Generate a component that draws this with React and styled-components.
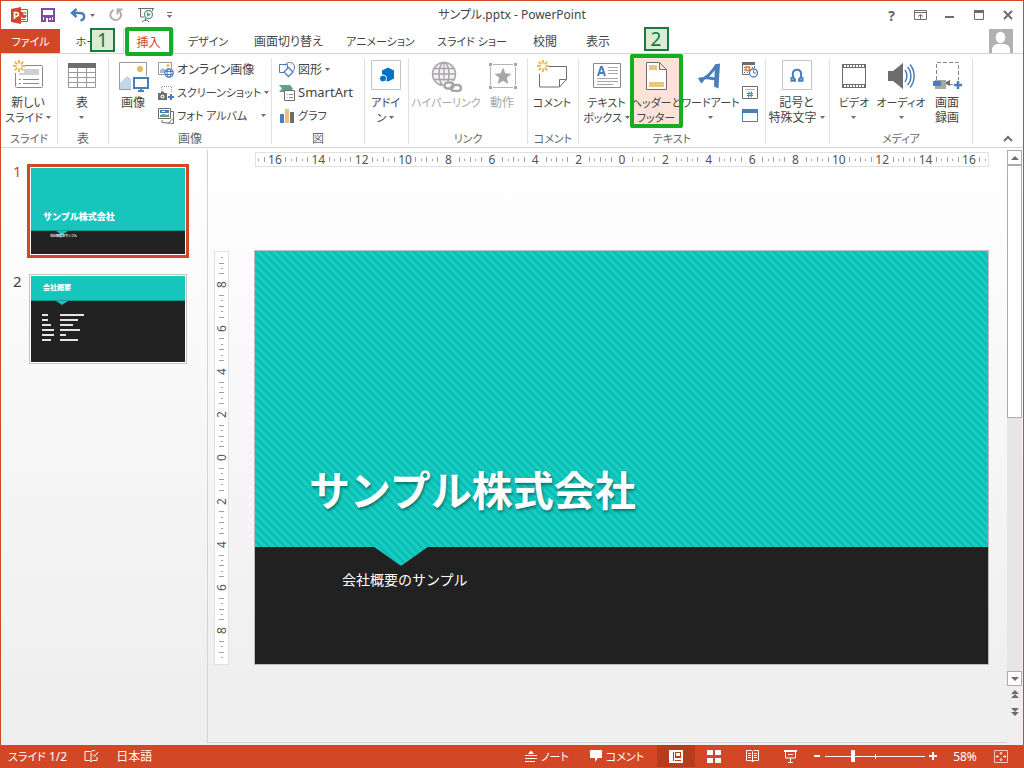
import React from "react";
import styled, { createGlobalStyle, css } from "styled-components";

const RED = "#d24726";
const GREEN = "#13ad26";
const GREY = "#6d6d6d";
const BLUE = "#4a7ebb";
const TAN = "#ecc67c";

const Global = createGlobalStyle`
  *, *::before, *::after { box-sizing: border-box; }
  body { margin: 0; }
  body, button, input {
    font-family: "Noto Sans", "Noto Sans CJK JP", sans-serif;
    font-size: 12px;
    line-height: 15px;
    color: #444;
  }
  button { border: 0; padding: 0; margin: 0; background: none; font-feature-settings: "palt"; white-space: nowrap; }
  svg { display: block; flex: none; }
`;

const Window = styled.div`
  min-height: 100vh;
  display: flex;
  flex-direction: column;
  border: 1px solid ${RED};
  background: #fff;
  font-feature-settings: "palt";
`;

/* Katakana labels are set one size down so that they stay compact. */
const Kana = styled.span`
  font-size: 11px;
`;

/* ---------- title bar ---------- */
const TitleBar = styled.header`
  height: 28px;
  display: grid;
  grid-template-columns: 1fr auto 1fr;
  align-items: center;
`;
const QuickAccess = styled.div`
  display: flex;
  align-items: center;
  padding-left: 8px;
`;
const QuickButton = styled.button`
  width: ${(p) => p.$w || 28}px;
  height: 26px;
  display: flex;
  align-items: center;
  justify-content: center;
  gap: 4px;
`;
const Title = styled.h1`
  margin: 0;
  font-size: 12px;
  line-height: 16px;
  font-weight: 400;
`;
const WindowButtons = styled.div`
  display: flex;
  justify-content: flex-end;
  padding-right: 1px;
`;
const WindowButton = styled.button`
  width: 29px;
  height: 28px;
  display: flex;
  align-items: center;
  justify-content: center;
  font-size: 14px;
  font-weight: 700;
  color: #666;
`;

/* ---------- tabs ---------- */
const TabRow = styled.nav`
  height: 25px;
  display: flex;
  border-bottom: 1px solid #d4d4d4;
`;
const Tab = styled.button`
  position: relative;
  width: ${(p) => p.$w}px;
  height: 25px;
  flex: none;
  ${(p) => p.$file && css`background: ${RED}; color: #fff; height: 24px;`}
  ${(p) => p.$active && css`
    color: ${RED};
    background: #fff;
    border: 1px solid #d4d4d4;
    border-bottom: 0;
  `}
`;
const Avatar = styled.div`
  margin: 0 10px 0 auto;
  width: 24px;
  height: 24px;
  background: #b1b1b1;
`;

/* ---------- tutorial marks ---------- */
const Frame = styled.span`
  position: absolute;
  inset: ${(p) => p.$inset};
  border: 4px solid ${GREEN};
  border-radius: 2px;
  pointer-events: none;
  z-index: 2;
`;
const Badge = styled.span`
  position: absolute;
  left: ${(p) => p.$left}px;
  top: ${(p) => p.$top}px;
  z-index: 3;
  width: 25px;
  height: 24px;
  border: 2px solid #187a41;
  background: #dcebd4;
  color: #15773c;
  font-size: 19px;
  line-height: 20px;
  text-align: center;
`;

/* ---------- ribbon ---------- */
const Ribbon = styled.section`
  height: 94px;
  display: flex;
  border-bottom: 1px solid #d4d4d4;
  padding-top: 4px;
`;
const Group = styled.div`
  width: ${(p) => p.$w}px;
  height: 86px;
  flex: none;
  display: flex;
  flex-direction: column;
  border-right: 1px solid #e1e1e1;
`;
const GroupBody = styled.div`
  flex: none;
  height: 74px;
  display: flex;
  justify-content: center;
  padding-right: 2px;
`;
const GroupLabel = styled.div`
  flex: none;
  line-height: 14px;
  text-align: center;
  color: #666;
  white-space: nowrap;
`;
const Large = styled.button`
  position: relative;
  width: ${(p) => p.$w}px;
  height: 70px;
  flex: none;
  display: flex;
  flex-direction: column;
  align-items: center;
  gap: 3px;
  padding-top: 2px;
  text-align: center;
  color: ${(p) => (p.disabled ? "#a6a6a6" : "#444")};
  background: ${(p) => (p.$hot ? "#fde2d9" : "transparent")};
`;
const LargeLabel = styled.span`
  display: flex;
  flex-direction: column;
  align-items: center;
`;
const LabelLine = styled.span`
  height: 15px;
  display: flex;
  align-items: center;
  gap: 3px;
`;
const SmallColumn = styled.div`
  width: ${(p) => p.$w}px;
  display: flex;
  flex-direction: column;
`;
const Small = styled.button`
  height: 23px;
  display: flex;
  align-items: center;
  gap: 3px;
  padding: 0 2px;
`;
const Fill = styled.span`
  flex: ${(p) => (p.$grow ? 1 : "none")};
  text-align: left;
  font-size: ${(p) => (p.$latin ? 13 : 12)}px;
`;
const RibbonEnd = styled.div`
  flex: 1;
  display: flex;
  align-items: flex-end;
  justify-content: flex-end;
  padding: 0 10px 4px 0;
`;

/* ---------- work area ---------- */
const Work = styled.main`
  flex: 1;
  display: flex;
  background: linear-gradient(#fff, #efefef 90%);
  padding-top: 2px;
`;
const ThumbPane = styled.ol`
  width: 207px;
  flex: none;
  margin: 0 0 2px;
  padding: 14px 18px 0 12px;
  list-style: none;
  border-right: 1px solid #d4d4d4;
  display: flex;
  flex-direction: column;
  gap: 16px;
`;
const ThumbItem = styled.li`
  display: flex;
  align-items: flex-start;
  justify-content: space-between;
`;
const ThumbNumber = styled.span`
  font-size: 15px;
  line-height: 14px;
  color: ${(p) => (p.$on ? RED : "#444")};
`;
const Thumb = styled.button`
  width: ${(p) => (p.$on ? 162 : 158)}px;
  height: ${(p) => (p.$on ? 94 : 90)}px;
  margin-right: ${(p) => (p.$on ? 0 : 2)}px;
  border: ${(p) => (p.$on ? `3px solid ${RED}` : "1px solid #c4c4c4")};
  padding: 1px;
  background: #fff;
  display: flex;
  flex-direction: column;
  text-align: left;
  color: #fff;
  font-feature-settings: normal;
`;
const ThumbTop = styled.span`
  width: 100%;
  height: ${(p) => p.$h}px;
  display: flex;
  align-items: flex-end;
  padding: 0 12px ${(p) => p.$pad}px;
  background: #16c6bd;
  border-bottom: 1px solid #119c95;
  font-size: ${(p) => p.$size}px;
  line-height: 12px;
  font-weight: 900;
`;
const ThumbBottom = styled.span`
  width: 100%;
  flex: 1;
  background: #222;
  display: flex;
  flex-direction: column;
`;
const ThumbPointer = styled.span`
  margin-left: 25px;
  border: solid transparent;
  border-width: 4px 6px 0;
  border-top-color: #16c6bd;
  width: 12px;
`;
const ThumbSub = styled.span`
  padding-left: 19px;
  font-size: 3px;
  line-height: 3px;
  font-weight: 700;
`;
const ThumbTable = styled.span`
  display: grid;
  grid-template-columns: 18px auto;
  grid-auto-rows: 5px;
  padding: 9px 0 0 11px;
`;
const Bar = styled.span`
  width: ${(p) => p.$w}px;
  height: 2px;
  background: #e4e4e4;
`;

const Stage = styled.section`
  flex: 1;
  min-width: 0;
  display: grid;
  grid-template-columns: 15px 1fr;
  grid-template-rows: 15px auto;
  column-gap: 25px;
  row-gap: 83px;
  align-content: start;
  padding: 2px 18px 0 6px;
  margin-bottom: 2px;
  border-bottom: 1px solid #d4d4d4;
`;
const RulerH = styled.div`
  grid-column: 2;
  height: 15px;
  margin-left: 1px;
  border: 1px solid #e1e1e1;
  background: #fff;
  display: flex;
  align-items: center;
`;
const RulerV = styled.div`
  margin-top: 1px;
  border: 1px solid #e1e1e1;
  background: #fff;
  display: flex;
  flex-direction: column;
  align-items: center;
  padding: 3px 0;
`;
const Notch = styled.span`
  flex: 1 1 0;
  min-width: 0;
  min-height: 0;
  display: flex;
  align-items: center;
  justify-content: center;
`;
const Tick = styled.i`
  flex: none;
  width: ${(p) => (p.$v ? p.$len : 1)}px;
  height: ${(p) => (p.$v ? 1 : p.$len)}px;
  background: #a0a0a0;
`;
const RulerNumber = styled.span`
  flex: none;
  font-size: 12px;
  line-height: 13px;
  color: #555;
  ${(p) => p.$v && css`writing-mode: vertical-rl; transform: rotate(180deg);`}
`;
const Slide = styled.article`
  aspect-ratio: 734 / 414;
  border: 1px solid #bdbdbd;
  background: #212121;
  display: flex;
  flex-direction: column;
  color: #fff;
  font-feature-settings: normal;
`;
const stripes = css`
  background: linear-gradient(45deg, #1dcbc0 30%, #07c1b7 30% 50%, #1dcbc0 50% 80%, #07c1b7 80%) 0 0 / 8px 8px;
`;
const SlideTop = styled.div`
  flex: 296 1 0;
  ${stripes}
  display: flex;
  align-items: flex-end;
`;
const SlideBottom = styled.div`
  flex: 117 1 0;
`;
const SlideTitle = styled.h2`
  margin: 0 54px 30px;
  font-size: 41px;
  line-height: 54px;
  font-weight: 700;
  text-shadow: 1px 2px 3px rgba(0, 60, 60, 0.6);
`;
const Pointer = styled.div`
  width: 54px;
  height: 19px;
  margin-left: 119px;
  ${stripes}
  clip-path: polygon(0 0, 100% 0, 54% 94%, 50% 100%, 46% 94%);
`;
const Subtitle = styled.p`
  margin: 4px 0 0 87px;
  font-size: 14px;
  line-height: 20px;
`;

/* ---------- scroll bar ---------- */
const ScrollBar = styled.div`
  width: 16px;
  flex: none;
  padding-right: 1px;
  display: flex;
  flex-direction: column;
`;
const ScrollTrack = styled.div`
  flex: 1;
  background: #e6e6e6;
`;
const ScrollThumb = styled.div`
  height: 50%;
  border: 1px solid #ababab;
  background: #fff;
`;
const ScrollButton = styled.button`
  width: 100%;
  height: ${(p) => (p.$plain ? 16 : 15)}px;
  border: ${(p) => (p.$plain ? "0" : "1px solid #ababab")};
  background: ${(p) => (p.$plain ? "transparent" : "#fff")};
  display: flex;
  align-items: center;
  justify-content: center;
`;
const ScrollFoot = styled.div`
  height: 59px;
  display: flex;
  flex-direction: column;
  gap: 2px;
`;

/* ---------- status bar ---------- */
const StatusBar = styled.footer`
  height: 22px;
  flex: none;
  display: flex;
  align-items: center;
  background: ${RED};
  color: #fff;
  padding: 0 10px 0 7px;
`;
const StatusButton = styled.button`
  width: ${(p) => (p.$w ? `${p.$w}px` : "auto")};
  height: 22px;
  display: flex;
  align-items: center;
  justify-content: center;
  gap: 4px;
  color: #fff;
  background: ${(p) => (p.$on ? "#b83b1d" : "transparent")};
`;
const StatusLeft = styled.div`
  flex: 1;
  display: flex;
  align-items: center;
  gap: 17px;
`;
const ZoomTrack = styled.div`
  width: 100px;
  height: 22px;
  display: flex;
  align-items: center;
  background: linear-gradient(#fff, #fff) 50px 50% / 1px 5px no-repeat;
`;
const Zoom = styled.input`
  appearance: none;
  width: 100%;
  height: 12px;
  margin: 0;
  background: linear-gradient(#fff, #fff) 0 50% / 100% 1px no-repeat;
  &::-webkit-slider-thumb {
    appearance: none;
    width: 4px;
    height: 12px;
    background: #fff;
  }
`;

/* ---------- icons ---------- */
const Svg = ({ w = 32, h = 32, children }) => (
  <svg width={w} height={h} viewBox={`0 0 ${w} ${h}`} fill="none" aria-hidden="true">{children}</svg>
);
const Arrow = ({ color = GREY }) => (
  <Svg w={5} h={3}><path d="M0 0h5L2.5 3z" fill={color} /></Svg>
);
const Spark = ({ x = 0, y = 0 }) => (
  <g transform={`translate(${x} ${y})`} stroke="#e9b958" strokeWidth="2">
    <path d="M6 0v3.5M6 8.5V12M0 6h3.5M8.5 6H12M1.8 1.8l2.4 2.4M7.8 7.8l2.4 2.4M10.2 1.8L7.8 4.2M4.2 7.8l-2.4 2.4" />
  </g>
);
const PptIcon = () => (
  <Svg w={17} h={17}>
    <path d="M8 2.5h8.500v12H8z" stroke={RED} fill="#fff" />
    <path d="M10 5h2.500v3H15.500A2.800 2.800 0 1 1 10 8z M13.500 4.500a2.500 2.500 0 0 1 2 2.200h-2z" fill={RED} />
    <path d="M10 12.500h5" stroke={RED} />
    <path d="M0 2l10-2v17L0 15z" fill={RED} />
    <path d="M3.500 12V5.500h2a1.800 1.800 0 0 1 0 3.800h-2" stroke="#fff" strokeWidth="1.700" />
  </Svg>
);
const SaveIcon = () => (
  <Svg w={14} h={14}>
    <path d="M1 1h12v12H1z" stroke="#7b4ba0" strokeWidth="2" fill="#fff" />
    <path d="M2 7h10v2H2z" fill="#7b4ba0" />
    <path d="M3 9h8v4H3z" fill="#7b4ba0" /><path d="M5 10h2v4H5zM8 10h2v2H8z" fill="#fff" />
  </Svg>
);
const UndoIcon = () => (
  <Svg w={16} h={14}><path d="M6.500 1L2 5l4.500 4M2 5h7.500c6.500 0 5.500 6.500 1 7.500" stroke={BLUE} strokeWidth="2.400" /></Svg>
);
const RedoIcon = () => (
  <Svg w={14} h={14}><path d="M4.500 2A5.300 5.300 0 1 0 9.500 2.300M8.500 6.500V1.500h5" stroke="#b0b0b0" strokeWidth="2" /></Svg>
);
const ShowIcon = () => (
  <Svg w={17} h={16}>
    <path d="M0 1.500h16M2.500 2v8h4M14.500 2v2M7.500 11v3M4 15l3-2h2l2 2" stroke={GREY} />
    <circle cx="10.500" cy="7.500" r="4" fill="#fff" stroke="#5d9c86" strokeWidth="1.300" />
    <path d="M9 5.200l4 2.300-4 2.300z" fill="#5d9c86" />
  </Svg>
);
const CustomIcon = () => (
  <Svg w={5} h={6}><path d="M0 .5h5" stroke={GREY} /><path d="M0 3h5L2.500 6z" fill={GREY} /></Svg>
);
const RibbonModeIcon = () => (
  <Svg w={13} h={10}><path d="M.5.5h12v9H.5zM.5 2.500h12M6.500 9V4.500M4 6.500l2.500-2 2.500 2" stroke={GREY} /></Svg>
);
const MinIcon = () => <Svg w={9} h={10}><path d="M0 7h9" stroke={GREY} strokeWidth="2" /></Svg>;
const MaxIcon = () => (
  <Svg w={10} h={10}><path d="M.5.5h9v9h-9z" stroke={GREY} /><path d="M0 1.500h10" stroke={GREY} strokeWidth="3" /></Svg>
);
const CloseIcon = () => <Svg w={10} h={10}><path d="M1 1l8 8M9 1L1 9" stroke={GREY} strokeWidth="2" /></Svg>;
const Person = () => (
  <Svg w={24} h={24}>
    <ellipse cx="11.500" cy="8.500" rx="4.800" ry="5.800" fill="#fff" />
    <path d="M3 24v-3c0-4 3-6 6-6h5c4 0 7 2 7 6v3z" fill="#fff" />
  </Svg>
);

const NewSlideIcon = () => (
  <Svg>
    <rect x="3.500" y="5.500" width="27" height="22" rx="1" stroke="#8a8a8a" fill="#fff" />
    <path d="M7 9h20v6H7z" fill="#d0d0d0" />
    <path d="M7 19.500h2M11 19.500h16M7 23.500h2M11 23.500h16" stroke="#8a8a8a" />
    <path d="M0 0h12v13H0z" fill="#fff" /><Spark x={1} />
  </Svg>
);
const TableIcon = () => (
  <Svg>
    <path d="M2.500 3.500h27v24h-27z" stroke="#9a9a9a" fill="#fff" />
    <path d="M2 3h28v5H2z" fill={GREY} />
    <path d="M3 12.500h26M3 17.500h26M3 22.500h26M11.500 8v19M20.500 8v19" stroke="#9a9a9a" />
  </Svg>
);
const PictureIcon = () => (
  <Svg>
    <path d="M2.500 2.500h27v27h-27z" stroke="#9a9a9a" fill="#fff" />
    <circle cx="23" cy="9" r="3" fill="#e9b958" />
    <path d="M3 23l7-7 5 4v9H3z" fill="#c3d5ea" />
    <path d="M14 16h18v16H14z" fill="#fff" />
    <path d="M17 18h14v10H17z" stroke={BLUE} strokeWidth="2" /><path d="M21 31h6M24 28v2" stroke={BLUE} strokeWidth="2" />
  </Svg>
);
const OnlineIcon = () => (
  <Svg w={16} h={16}>
    <path d="M.5.5h13v12H.5z" stroke="#9a9a9a" fill="#fff" />
    <circle cx="10" cy="3.500" r="1.500" fill="#e9b958" /><path d="M2 8l3-2 2 2v3H2z" fill="#9fbbe0" />
    <circle cx="11" cy="11" r="5" fill="#fff" /><circle cx="11" cy="11" r="4.200" stroke={BLUE} strokeWidth="1.300" />
    <ellipse cx="11" cy="11" rx="2" ry="4.200" stroke={BLUE} /><path d="M7 9.500h8M7 12.500h8" stroke={BLUE} />
  </Svg>
);
const ShotIcon = () => (
  <Svg w={16} h={16}>
    <path d="M4 1.500h10M13.500 2v6M3.500 2v5" stroke="#9a9a9a" strokeDasharray="1 1" />
    <path d="M0 8h3V6.500h3V8h3v7H0z" fill={GREY} /><circle cx="4.500" cy="11.500" r="2" fill="#fff" /><circle cx="4.500" cy="11.500" r="1" fill={GREY} />
    <path d="M13 9v6M10 12h6" stroke={BLUE} strokeWidth="2" />
  </Svg>
);
const AlbumIcon = () => (
  <Svg w={16} h={16}>
    <path d="M13 3.500h2.500v12L4 14.500V12" stroke={GREY} />
    <path d="M.5.5h12v10H.500z" stroke={GREY} fill="#fff" />
    <path d="M2 2h9v3H2z" fill={BLUE} /><path d="M4 3h3v1H4z" fill="#fff" />
    <path d="M2 9V7l3-1 4 1 2-1v3z" fill="#5d9c86" />
    <path d="M10 15.500l5-5" stroke={GREY} />
  </Svg>
);
const ShapesIcon = () => (
  <Svg w={16} h={16}>
    <path d="M.5 2.500h8v8h-8z" stroke={BLUE} fill="#fff" /><path d="M6 3.500a5 5 0 1 1 8 5.500" stroke={BLUE} />
    <path d="M9.500 5.500l4.500 4.500-4.500 4.500L5 10z" stroke={BLUE} fill="#fff" strokeWidth="1.300" />
  </Svg>
);
const SmartIcon = () => (
  <Svg w={16} h={16}>
    <path d="M0 0h11l3 3.500L11 7H0l3-3.500z" fill="#62a08a" />
    <path d="M5.500 5.500h10v10h-10z" stroke={GREY} fill="#fff" /><path d="M7.500 9.500h1M10 9.500h4M7.500 12.500h1M10 12.500h4" stroke="#8a8a8a" />
  </Svg>
);
const ChartIcon = () => (
  <Svg w={16} h={16}>
    <path d="M1 6h4v9H1z" fill={BLUE} /><path d="M6 1h4v14H6z" fill="#ecc07a" /><path d="M11 4h4v11h-4z" fill={GREY} />
  </Svg>
);
const AddinIcon = () => (
  <Svg>
    <path d="M1.500.5h29v29h-29z" stroke="#c6c6c6" />
    <path d="M18 7.500l6 3v8l-6 3-2.500-1a4 4 0 0 0-3.500-6V10.500z" fill="#0072c6" />
    <circle cx="13" cy="18.500" r="3.500" fill="#0072c6" stroke="#fff" />
  </Svg>
);
const LinkIcon = () => (
  <Svg>
    <circle cx="14" cy="14" r="11.500" stroke="#a6a6a6" strokeWidth="1.500" fill="#f4f0f6" />
    <ellipse cx="14" cy="14" rx="5" ry="11.500" stroke="#a6a6a6" strokeWidth="1.500" />
    <path d="M4 8.500h20M2 14h24M4 19.500h20M14 2v23" stroke="#a6a6a6" strokeWidth="1.300" />
    <path d="M13 21h12v3h7v8H13z" fill="#fff" />
    <rect x="14.500" y="22.500" width="9" height="6" rx="3" stroke="#a6a6a6" strokeWidth="2.500" />
    <rect x="21" y="25" width="10" height="6" rx="3" stroke="#a6a6a6" strokeWidth="2.500" />
  </Svg>
);
const ActionIcon = () => (
  <Svg>
    <path d="M4.500 4.500h25v23h-25z" stroke="#b4b4b4" />
    <path d="M3 3h4v4H3zM27 3h4v4h-4zM3 25h4v4H3zM27 25h4v4h-4z" fill="#fff" />
    <path d="M3 3h3v3H3zM28 3h3v3h-3zM3 26h3v3H3zM28 26h3v3h-3z" fill="#a6a6a6" />
    <path d="M17 7.500l2.300 5.800 6.200.5-4.700 4 1.500 6.200L17 20.700 11.700 24l1.500-6.200-4.700-4 6.200-.5z" fill="#a6a6a6" />
  </Svg>
);
const CommentIcon = () => (
  <Svg>
    <path d="M13 6.500h17.500v13l-7 7.500H3.500V14M30 19.500h-6.500V27" stroke={GREY} /><Spark x={1} />
  </Svg>
);
const TextBoxIcon = () => (
  <Svg>
    <path d="M2.500 3.500h27v24h-27z" stroke="#8a8a8a" fill="#fff" />
    <path d="M7 16l3-9h1l3 9M8.500 13h5" stroke={BLUE} strokeWidth="2" />
    <path d="M17 7.500h10M17 10.500h10M17 13.500h10M6 18.500h21M6 21.500h21M6 24.500h16" stroke="#a8a8a8" />
  </Svg>
);
const HeaderFooterIcon = () => (
  <Svg>
    <path d="M6.500 2.500h13l7 7v20h-20zM19.500 2.500v7h7" stroke={GREY} fill="#fff" />
    <path d="M9 5h8v5H9zM9 22h15v5H9z" fill={TAN} />
  </Svg>
);
const WordArtIcon = () => (
  <Svg>
    <path d="M20 4.500l5-1-1.500 25-4.500-2z" fill={BLUE} />
    <path d="M22 4.500C18 11 13 18 5 20M10.500 17.500l10 1.500" stroke={BLUE} strokeWidth="3" />
    <path d="M3 18l4-1 2 4-3 2.500z" fill={BLUE} />
  </Svg>
);
const DateIcon = () => (
  <Svg w={16} h={16}>
    <path d="M.5 1v11.500H7M12.500 4v2" stroke={GREY} /><path d="M0 0h13v3H0z" fill={GREY} />
    <path d="M2 5.500h1M2 8h1M2 10.500h1M5 10.500h1M10 5.500h1" stroke={GREY} /><path d="M4 5h3.500v3.500H4z" stroke="#e07b2e" strokeWidth="1.500" />
    <circle cx="11.500" cy="11" r="4" stroke={BLUE} fill="#fff" strokeWidth="1.300" /><path d="M11.500 8.500V11H14" stroke={GREY} />
  </Svg>
);
const NumberIcon = () => (
  <Svg w={16} h={16}>
    <path d="M.5 1.500h15v12H.5z" stroke={GREY} /><path d="M3 4.500h10" stroke="#bbb" />
    <path d="M5 8.500h6M5 10.500h6M7 6.500l-.5 6M9.500 6.500l-.5 6" stroke={BLUE} />
  </Svg>
);
const ObjectIcon = () => (
  <Svg w={16} h={16}><path d="M.5 1.500h15v12H.5z" stroke={BLUE} fill="#fff" /><path d="M0 1h16v4H0z" fill={BLUE} /></Svg>
);
const OmegaIcon = () => (
  <Svg>
    <path d="M1.500.5h29v29h-29z" stroke="#c6c6c6" />
    <path d="M10.500 17v3.800h3.500v-1.300c-1.500-1-2.200-3-2.200-5.200 0-3 1.500-4.500 4.200-4.500s4.200 1.500 4.200 4.500c0 2.200-.7 4.200-2.200 5.200v1.300h3.500V17" stroke={BLUE} strokeWidth="2" />
  </Svg>
);
const VideoIcon = () => (
  <Svg>
    <path d="M4.500 4.500h23v23h-23z" stroke={GREY} fill="#fff" /><path d="M4 4h24v4H4zM4 24h24v4H4z" fill={GREY} />
    <path d="M6 6h21M6 26h21" stroke="#fff" strokeWidth="2" strokeDasharray="2 1" />
  </Svg>
);
const AudioIcon = () => (
  <Svg>
    <path d="M3 11h5l10-8v26l-10-8H3z" fill={GREY} />
    <path d="M20 10c2.500 3.500 2.500 8.500 0 12M22.500 7c4.500 5 4.500 13 0 18M25 4.500c5.500 6.500 5.500 16.500 0 23" stroke={BLUE} strokeWidth="1.500" />
  </Svg>
);
const RecordIcon = () => (
  <Svg>
    <path d="M5.500 20V2.500h22V20M18 24.500h5" stroke="#8a8a8a" strokeDasharray="4 2" />
    <path d="M4 20h11v9H4z" fill="#a6a6a6" /><path d="M2 21h8v5H2z" fill={BLUE} /><path d="M15 22l4-2v6l-4-2z" fill={GREY} />
    <path d="M27 21v8M23 25h8" stroke={BLUE} strokeWidth="2.500" />
  </Svg>
);

const NotesIcon = () => (
  <Svg w={12} h={12}><path d="M3 4l3-3.500L9 4z" fill="#fff" /><path d="M0 5.500h12M0 8.500h12M0 11.500h10" stroke="#fff" /></Svg>
);
const BubbleIcon = () => <Svg w={12} h={12}><path d="M0 0h12v8H8l-3 4V8H0z" fill="#fff" /></Svg>;
const SpellIcon = () => (
  <Svg w={15} h={14}>
    <path d="M6.500 2.500H1v9h4.500l1.500 1.500 1.500-1.500H13V8M7 3.500V12M7 3l1.500-1.500H11M8.500 5.500l2 2L14 3" stroke="#fff" />
  </Svg>
);
const NormalIcon = () => (
  <Svg w={14} h={13}><path d="M0 0h14v13H0zM4 2v9h1V2zM6 2v6h6V2zM6 10v1h6v-1z" fill="#fff" fillRule="evenodd" /><path d="M7 3h4v3H7z" fill="#fff" /></Svg>
);
const SorterIcon = () => (
  <Svg w={14} h={13}><path d="M0 0h6v5H0zM8 0h6v5H8zM0 8h6v5H0zM8 8h6v5H8z" fill="#fff" /></Svg>
);
const ReadIcon = () => (
  <Svg w={13} h={13}>
    <path d="M.5.500h5l1 1 1-1h5v10h-5l-1 1.500-1-1.500h-5zM6.500 2v10M2 3.500h3M2 5.500h3M2 7.500h3M8 3.500h3M8 5.500h3M8 7.500h3" stroke="#fff" />
  </Svg>
);
const PlayIcon = () => (
  <Svg w={13} h={13}><path d="M0 1h13" stroke="#fff" strokeWidth="2" /><path d="M1.500 1v7h10V1M4 4.500h5M6.500 8v4M4 12.500h5" stroke="#fff" /></Svg>
);
const FitIcon = () => (
  <Svg w={14} h={13}>
    <path d="M.5.5h13v12H.5z" stroke="#f4c6ba" /><path d="M7 2v3M7 8v3M2 6.500h3M9 6.500h3" stroke="#fff" /><path d="M5.500 3.500L7 2l1.500 1.500M5.500 9.500L7 11l1.500-1.500M3.500 5L2 6.500 3.500 8M10.500 5L12 6.500 10.500 8" stroke="#f4c6ba" />
  </Svg>
);

/* ---------- pieces ---------- */
const isKana = (text) => /[ァ-ヶ]/.test(text) && !/[一-龠]/.test(text);
const Text = ({ children }) => (isKana(children) ? <Kana>{children}</Kana> : children);

const BigButton = ({ icon, lines, menu, width, children, ...rest }) => (
  <Large $w={width} {...rest}>
    {icon}
    <LargeLabel>
      {lines.map((line, i) => (
        <LabelLine key={i}>
          <Text>{line}</Text>
          {menu && i === lines.length - 1 && <Arrow />}
        </LabelLine>
      ))}
    </LargeLabel>
    {children}
  </Large>
);
const SmallButton = ({ icon, label, name, menu, grow, latin }) => (
  <Small aria-label={name}>
    {icon}
    {label && <Fill $grow={grow} $latin={latin}><Text>{label}</Text></Fill>}
    {menu && <Arrow />}
  </Small>
);
const RibbonGroup = ({ width, label, children }) => (
  <Group $w={width}>
    <GroupBody>{children}</GroupBody>
    <GroupLabel><Text>{label}</Text></GroupLabel>
  </Group>
);
const Notches = ({ reach, vertical }) =>
  Array.from({ length: reach * 2 + 1 }, (_, i) => {
    const k = Math.abs(i - reach);
    const step = k % 8;
    return (
      <Notch key={i}>
        {step === 0 && <RulerNumber $v={vertical}>{k / 4}</RulerNumber>}
        {step > 1 && step < 7 && <Tick $v={vertical} $len={step % 2 ? 2 : 5} />}
      </Notch>
    );
  });

const ROWS = [[6, 24], [6, 18], [9, 13], [12, 20], [12, 6], [9, 18]];

export default function App() {
  return (
    <>
      <Global />
      <Window lang="ja">
        <TitleBar>
          <QuickAccess>
            <QuickButton $w={21} aria-label="PowerPoint"><PptIcon /></QuickButton>
            <QuickButton $w={36} aria-label="上書き保存"><SaveIcon /></QuickButton>
            <QuickButton $w={33} aria-label="元に戻す"><UndoIcon /><Arrow /></QuickButton>
            <QuickButton $w={34} aria-label="やり直し"><RedoIcon /></QuickButton>
            <QuickButton $w={27} aria-label="スライド ショー"><ShowIcon /></QuickButton>
            <QuickButton $w={19} aria-label="カスタマイズ"><CustomIcon /></QuickButton>
          </QuickAccess>
          <Title>サンプル.pptx - PowerPoint</Title>
          <WindowButtons>
            <WindowButton>?</WindowButton>
            <WindowButton aria-label="リボンの表示"><RibbonModeIcon /></WindowButton>
            <WindowButton aria-label="最小化"><MinIcon /></WindowButton>
            <WindowButton aria-label="最大化"><MaxIcon /></WindowButton>
            <WindowButton aria-label="閉じる"><CloseIcon /></WindowButton>
          </WindowButtons>
        </TitleBar>

        <TabRow>
          <Tab $w={59} $file><Text>ファイル</Text></Tab>
          <Tab $w={63}><Text>ホーム</Text><Badge $left={30} $top={-1}>1</Badge></Tab>
          <Tab $w={51} $active>挿入<Frame $inset="-3px 0 -2px 1px" /></Tab>
          <Tab $w={68}><Text>デザイン</Text></Tab>
          <Tab $w={93}>画面切り替え</Tab>
          <Tab $w={91}><Text>アニメーション</Text></Tab>
          <Tab $w={92}><Text>スライド ショー</Text></Tab>
          <Tab $w={54}>校閲</Tab>
          <Tab $w={52}>表示</Tab>
          <Avatar><Person /></Avatar>
        </TabRow>

        <Ribbon>
          <RibbonGroup width={57} label="スライド">
            <BigButton width={54} icon={<NewSlideIcon />} lines={["新しい", "スライド"]} menu />
          </RibbonGroup>
          <RibbonGroup width={51} label="表">
            <BigButton width={48} icon={<TableIcon />} lines={["表", ""]} menu />
          </RibbonGroup>
          <RibbonGroup width={163} label="画像">
            <BigButton width={46} icon={<PictureIcon />} lines={["画像"]} />
            <SmallColumn $w={112}>
              <SmallButton icon={<OnlineIcon />} label="オンライン画像" />
              <SmallButton icon={<ShotIcon />} label="スクリーンショット" menu grow />
              <SmallButton icon={<AlbumIcon />} label="フォト アルバム" menu grow />
            </SmallColumn>
          </RibbonGroup>
          <RibbonGroup width={93} label="図">
            <SmallColumn $w={80}>
              <SmallButton icon={<ShapesIcon />} label="図形" menu />
              <SmallButton icon={<SmartIcon />} label="SmartArt" latin />
              <SmallButton icon={<ChartIcon />} label="グラフ" />
            </SmallColumn>
          </RibbonGroup>
          <RibbonGroup width={44} label="">
            <BigButton width={42} icon={<AddinIcon />} lines={["アドイ", "ン"]} menu />
          </RibbonGroup>
          <RibbonGroup width={119} label="リンク">
            <BigButton width={70} icon={<LinkIcon />} lines={["ハイパーリンク"]} disabled />
            <BigButton width={42} icon={<ActionIcon />} lines={["動作"]} disabled />
          </RibbonGroup>
          <RibbonGroup width={51} label="コメント">
            <BigButton width={46} icon={<CommentIcon />} lines={["コメント"]} />
          </RibbonGroup>
          <RibbonGroup width={187} label="テキスト">
            <BigButton width={48} icon={<TextBoxIcon />} lines={["テキスト", "ボックス"]} menu />
            <BigButton width={51} icon={<HeaderFooterIcon />} lines={["ヘッダーと", "フッター"]} $hot>
              <Frame $inset="-4px -1px 0" />
              <Badge $left={13} $top={-31}>2</Badge>
            </BigButton>
            <BigButton width={58} icon={<WordArtIcon />} lines={["ワードアート", ""]} menu />
            <SmallColumn $w={20}>
              <SmallButton icon={<DateIcon />} name="日付と時刻" />
              <SmallButton icon={<NumberIcon />} name="スライド番号" />
              <SmallButton icon={<ObjectIcon />} name="オブジェクト" />
            </SmallColumn>
          </RibbonGroup>
          <RibbonGroup width={64} label="">
            <BigButton width={61} icon={<OmegaIcon />} lines={["記号と", "特殊文字"]} menu />
          </RibbonGroup>
          <RibbonGroup width={143} label="メディア">
            <BigButton width={46} icon={<VideoIcon />} lines={["ビデオ", ""]} menu />
            <BigButton width={48} icon={<AudioIcon />} lines={["オーディオ", ""]} menu />
            <BigButton width={44} icon={<RecordIcon />} lines={["画面", "録画"]} />
          </RibbonGroup>
          <RibbonEnd>
            <button aria-label="リボンを折りたたむ">
              <Svg w={10} h={8}><path d="M1 6l4-4 4 4" stroke={GREY} strokeWidth="2" /></Svg>
            </button>
          </RibbonEnd>
        </Ribbon>

        <Work>
          <ThumbPane>
            <ThumbItem>
              <ThumbNumber $on>1</ThumbNumber>
              <Thumb $on>
                <ThumbTop $h={63} $pad={7} $size={9}>サンプル株式会社</ThumbTop>
                <ThumbBottom>
                  <ThumbPointer />
                  <ThumbSub>会社概要のサンプル</ThumbSub>
                </ThumbBottom>
              </Thumb>
            </ThumbItem>
            <ThumbItem>
              <ThumbNumber>2</ThumbNumber>
              <Thumb>
                <ThumbTop $h={25} $pad={6} $size={7}>会社概要</ThumbTop>
                <ThumbBottom>
                  <ThumbPointer />
                  <ThumbTable>
                    {ROWS.map(([a, b], i) => (
                      <React.Fragment key={i}><Bar $w={a} /><Bar $w={b} /></React.Fragment>
                    ))}
                  </ThumbTable>
                </ThumbBottom>
              </Thumb>
            </ThumbItem>
          </ThumbPane>

          <Stage>
            <RulerH><Notches reach={67} /></RulerH>
            <RulerV><Notches reach={37} vertical /></RulerV>
            <Slide>
              <SlideTop><SlideTitle>サンプル株式会社</SlideTitle></SlideTop>
              <SlideBottom>
                <Pointer />
                <Subtitle>会社概要のサンプル</Subtitle>
              </SlideBottom>
            </Slide>
          </Stage>

          <ScrollBar>
            <ScrollButton aria-label="上へ"><Svg w={8} h={4}><path d="M0 4h8L4 0z" fill={GREY} /></Svg></ScrollButton>
            <ScrollTrack><ScrollThumb /></ScrollTrack>
            <ScrollButton aria-label="下へ"><Svg w={8} h={4}><path d="M0 0h8L4 4z" fill={GREY} /></Svg></ScrollButton>
            <ScrollFoot>
              <ScrollButton $plain aria-label="前のスライド">
                <Svg w={8} h={8}><path d="M0 4h8L4 0zM0 8h8L4 4z" fill={GREY} /></Svg>
              </ScrollButton>
              <ScrollButton $plain aria-label="次のスライド">
                <Svg w={8} h={8}><path d="M0 0h8L4 4zM0 4h8L4 8z" fill={GREY} /></Svg>
              </ScrollButton>
            </ScrollFoot>
          </ScrollBar>
        </Work>

        <StatusBar>
          <StatusLeft>
            <span><Kana>スライド</Kana> 1/2</span>
            <StatusButton aria-label="スペル チェック"><SpellIcon /></StatusButton>
            <StatusButton>日本語</StatusButton>
          </StatusLeft>
          <StatusButton $w={60}><NotesIcon /><Text>ノート</Text></StatusButton>
          <StatusButton $w={80}><BubbleIcon /><Text>コメント</Text></StatusButton>
          <StatusButton $w={38} $on aria-label="標準"><NormalIcon /></StatusButton>
          <StatusButton $w={38} aria-label="スライド一覧"><SorterIcon /></StatusButton>
          <StatusButton $w={38} aria-label="閲覧表示"><ReadIcon /></StatusButton>
          <StatusButton $w={38} aria-label="スライド ショー"><PlayIcon /></StatusButton>
          <StatusButton $w={16} aria-label="縮小"><Svg w={6} h={2}><path d="M0 1h6" stroke="#fff" strokeWidth="2" /></Svg></StatusButton>
          <ZoomTrack><Zoom type="range" aria-label="ズーム" min="0" max="100" defaultValue="27" /></ZoomTrack>
          <StatusButton $w={16} aria-label="拡大"><Svg w={8} h={8}><path d="M0 4h8M4 0v8" stroke="#fff" strokeWidth="2" /></Svg></StatusButton>
          <StatusButton $w={48}>58%</StatusButton>
          <StatusButton $w={24} aria-label="ウィンドウに合わせる"><FitIcon /></StatusButton>
        </StatusBar>
      </Window>
    </>
  );
}
